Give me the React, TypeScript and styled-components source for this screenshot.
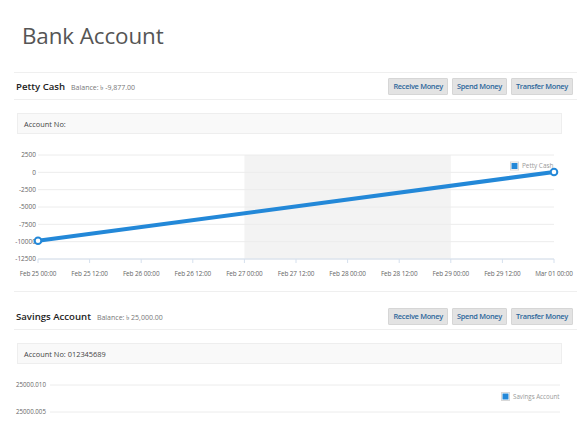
import styled, { createGlobalStyle } from 'styled-components';

const GlobalStyle = createGlobalStyle`
  html, body {
    margin: 0;
    padding: 0;
    background: #fff;
    overflow: hidden;
  }
  body {
    font-family: "Open Sans", "Noto Sans", "DejaVu Sans", sans-serif;
    color: #333;
  }
`;

const BLUE = '#2388d8';

const Page = styled.div`
  width: 586px;
  height: 436px;
  padding: 0 9px 0 14px;
  box-sizing: border-box;
`;

const Title = styled.h1`
  margin: 0;
  padding: 20px 0 20px 8px;
  font-size: 22.4px;
  line-height: 32px;
  font-weight: 400;
  color: #555;
  letter-spacing: -0.1px;
`;

const Panel = styled.section<{ $spaced?: boolean }>`
  border-top: 1px solid #efefef;
  padding-top: ${(p) => (p.$spaced ? '11px' : '0')};
`;

const PanelHeader = styled.header`
  display: flex;
  align-items: center;
  justify-content: space-between;
  height: 26px;
  padding: 0 4px 0 2px;
  border-bottom: 1px solid #efefef;
`;

const HeaderLeft = styled.div`
  display: flex;
  align-items: baseline;
  gap: 6px;
  padding-top: 2px;
`;

const AccountName = styled.span`
  font-size: 9.6px;
  font-weight: 600;
  color: #222;
`;

const Balance = styled.span`
  font-size: 7px;
  color: #777;
`;

const Actions = styled.div`
  display: flex;
  gap: 4px;
`;

const ActionButton = styled.button`
  height: 17px;
  padding: 0 4px;
  border: 1px solid #d6d6d6;
  border-radius: 1px;
  background: #e3e3e3;
  color: #2c679c;
  font-family: inherit;
  font-size: 7.4px;
  font-weight: 600;
  line-height: 15px;
  letter-spacing: -0.3px;
  cursor: pointer;
`;

const AccountBox = styled.div`
  margin: 13px 15px 0 3px;
  height: 21px;
  box-sizing: border-box;
  padding: 0 6px;
  display: flex;
  align-items: center;
  background: #f9f9f9;
  border: 1px solid #eeeeee;
  font-size: 7.4px;
  color: #444;
`;

const ChartSvg = styled.svg`
  display: block;
  overflow: visible;
  font-family: "Open Sans", "Noto Sans", sans-serif;
`;

const ChartSpacer = styled.div<{ $h: number }>`
  height: ${(p) => p.$h}px;
`;

const ticks = [
  'Feb 25 00:00',
  'Feb 25 12:00',
  'Feb 26 00:00',
  'Feb 26 12:00',
  'Feb 27 00:00',
  'Feb 27 12:00',
  'Feb 28 00:00',
  'Feb 28 12:00',
  'Feb 29 00:00',
  'Feb 29 12:00',
  'Mar 01 00:00',
];

const yValues = [2500, 0, -2500, -5000, -7500, -10000, -12500];

const PettyCashChart = () => {
  const left = 24;
  const right = 540;
  const top = 14;
  const bottom = 118;
  const yOf = (v: number) => bottom - ((v + 12500) / 15000) * (bottom - top);
  const xOf = (i: number) => left + ((right - left) / 10) * i;
  const y0 = yOf(-9877);
  const y1 = 31;
  return (
    <ChartSvg width={563} height={150} viewBox="0 0 563 150">
      <rect x={xOf(4)} y={top} width={xOf(8) - xOf(4)} height={bottom - top} fill="#f3f3f3" />
      {yValues.map((v) => (
        <g key={v}>
          <line x1={left} x2={right} y1={yOf(v)} y2={yOf(v)} stroke="#ececec" strokeWidth={1} />
          <text x={22} y={yOf(v) + 2.3} fontSize={6.5} fill="#666" textAnchor="end">
            {v}
          </text>
        </g>
      ))}
      <line x1={left} x2={right} y1={bottom} y2={bottom} stroke="#d5e0ee" strokeWidth={1} />
      {ticks.map((t, i) => (
        <g key={t}>
          <line x1={xOf(i)} x2={xOf(i)} y1={bottom} y2={bottom + 4} stroke="#d5e0ee" strokeWidth={1} />
          <text x={xOf(i)} y={134.5} fontSize={6.4} fill="#666" textAnchor="middle" letterSpacing={-0.1}>
            {t}
          </text>
        </g>
      ))}
      <line x1={left} y1={y0} x2={right} y2={y1} stroke={BLUE} strokeWidth={4} strokeLinecap="round" />
      <circle cx={left} cy={y0} r={3.3} fill="#fff" stroke={BLUE} strokeWidth={2} />
      <circle cx={right} cy={y1} r={3.3} fill="#fff" stroke={BLUE} strokeWidth={2} />
      <rect x={496.5} y={21} width={8} height={8} fill="#fff" stroke="#d8d8d8" strokeWidth={1} />
      <rect x={497.5} y={22} width={6} height={6} fill={BLUE} />
      <text x={508} y={27.3} fontSize={6.4} fill="#999">
        Petty Cash
      </text>
    </ChartSvg>
  );
};

const SavingsChart = () => (
  <ChartSvg width={563} height={70} viewBox="0 0 563 70">
    {[
      { y: 17, label: '25000.010' },
      { y: 44, label: '25000.005' },
    ].map((g) => (
      <g key={g.label}>
        <line x1={36} x2={546} y1={g.y} y2={g.y} stroke="#ececec" strokeWidth={1} />
        <text x={2} y={g.y + 2.2} fontSize={6.2} fill="#666">
          {g.label}
        </text>
      </g>
    ))}
    <rect x={487.5} y={24.5} width={8} height={8} fill="#fff" stroke="#d8d8d8" strokeWidth={1} />
    <rect x={488.5} y={25.5} width={6} height={6} fill={BLUE} />
    <text x={499} y={30.8} fontSize={6.2} fill="#999">
      Savings Account
    </text>
  </ChartSvg>
);

type AccountProps = {
  name: string;
  balance: string;
  accountNo: string;
  spaced?: boolean;
  gap: number;
  children: React.ReactNode;
};

const AccountPanel = ({ name, balance, accountNo, spaced, gap, children }: AccountProps) => (
  <Panel $spaced={spaced}>
    <PanelHeader>
      <HeaderLeft>
        <AccountName>{name}</AccountName>
        <Balance>Balance: ৳ {balance}</Balance>
      </HeaderLeft>
      <Actions>
        <ActionButton>Receive Money</ActionButton>
        <ActionButton>Spend Money</ActionButton>
        <ActionButton>Transfer Money</ActionButton>
      </Actions>
    </PanelHeader>
    <AccountBox>Account No: {accountNo}</AccountBox>
    <ChartSpacer $h={gap} />
    {children}
  </Panel>
);

const App = () => (
  <>
    <GlobalStyle />
    <Page>
      <Title>Bank Account</Title>
      <AccountPanel name="Petty Cash" balance="-9,877.00" accountNo="" gap={7}>
        <PettyCashChart />
      </AccountPanel>
      <AccountPanel name="Savings Account" balance="25,000.00" accountNo="012345689" spaced gap={4}>
        <SavingsChart />
      </AccountPanel>
    </Page>
  </>
);

export default App;
